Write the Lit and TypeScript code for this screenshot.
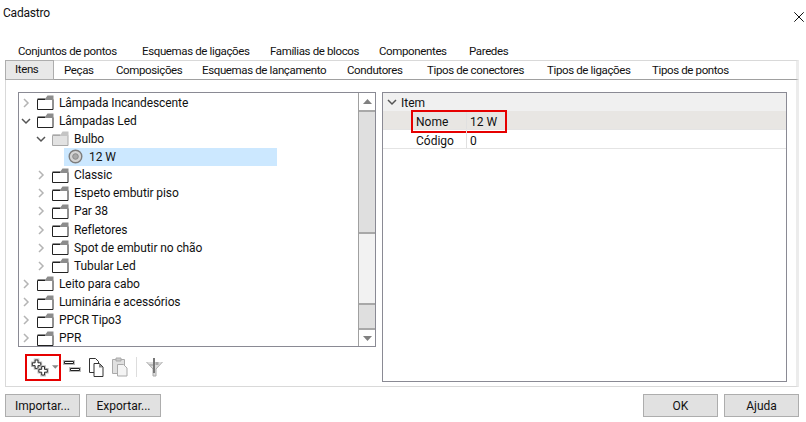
import { LitElement, html, css, svg } from "lit";
import { customElement } from "lit/decorators.js";

const row1 = [["Conjuntos de pontos", 124], ["Esquemas de ligações", 128], ["Famílias de blocos", 109], ["Componentes", 90], ["Paredes", 60]];
const row2 = [["Peças", 52], ["Composições", 86], ["Esquemas de lançamento", 145], ["Condutores", 80], ["Tipos de conectores", 120], ["Tipos de ligações", 105], ["Tipos de pontos", 90]];

type Node = { t: string; level: number; exp?: "c" | "o"; kind?: "gray" | "leaf"; sel?: boolean };
const tree: Node[] = [
  { t: "Lâmpada Incandescente", level: 0, exp: "c" },
  { t: "Lâmpadas Led", level: 0, exp: "o" },
  { t: "Bulbo", level: 1, exp: "o", kind: "gray" },
  { t: "12 W", level: 2, kind: "leaf", sel: true },
  { t: "Classic", level: 1, exp: "c" },
  { t: "Espeto embutir piso", level: 1, exp: "c" },
  { t: "Par 38", level: 1, exp: "c" },
  { t: "Refletores", level: 1, exp: "c" },
  { t: "Spot de embutir no chão", level: 1, exp: "c" },
  { t: "Tubular Led", level: 1, exp: "c" },
  { t: "Leito para cabo", level: 0, exp: "c" },
  { t: "Luminária e acessórios", level: 0, exp: "c" },
  { t: "PPCR Tipo3", level: 0, exp: "c" },
  { t: "PPR", level: 0, exp: "c" },
];

const chevO = svg`<path d="M1 3 L5 7 L9 3" fill="none" stroke="#555" stroke-width="1.5"/>`;
const chevC = svg`<path d="M3 1 L7 5 L3 9" fill="none" stroke="#b4b4b4" stroke-width="1.5"/>`;
const plusD = "M3.5 .5h3v3h3v3h-3v3h-3v-3h-3v-3h3z";
const plus = (x: number, y: number) => svg`<g transform="translate(${x} ${y})"><path d=${plusD} fill="none" stroke="#bdbdbd" stroke-width="3"/><path d=${plusD} fill="#fff" stroke="#222"/></g>`;

@customElement("app-root")
export class AppRoot extends LitElement {
  static styles = css`
    :host { display: block; width: 806px; height: 422px; background: #fff; position: relative; overflow: hidden;
      font-family: Roboto, "Open Sans", sans-serif; font-size: 12px; color: #111; }
    * { box-sizing: border-box; }
    .title { height: 40px; padding: 5px 0 0 3px; display: flex; justify-content: space-between; line-height: 17px; letter-spacing: -.2px; }
    .close { margin: 7px 2px 0 0; }
    .tabs { display: flex; font-size: 11.5px; letter-spacing: -.37px; }
    .r1 { height: 20px; padding-left: 18px; align-items: center; line-height: 20px; padding-top: 1px; }
    .tab { white-space: nowrap; flex: none; }
    .r2 { height: 20px; margin-left: 5px; width: 794px; border-top: 1px solid #d9d9d9; border-right: 3px solid #ececec; border-bottom: 1px solid #a0a0a0; align-items: center; position: relative; }
    .active { width: 49px; height: 20px; margin: -1px 10px 0 0; background: #e8e8e8; border: 1px solid #adadad; padding-left: 9px; line-height: 17px; flex: none; }
    .panel { margin-left: 5px; width: 794px; height: 307px; border: solid #d9d9d9; border-width: 0 3px 1px 1px; border-right-color: #ececec; padding: 12px 10px 0 12px; display: flex; gap: 6px; }
    .left { width: 358px; display: flex; flex-direction: column; flex: none; }
    .treebox { height: 255px; border: 1px solid #8a8a94; display: flex; overflow: hidden; }
    .tree { flex: 1; overflow: hidden; min-width: 0; letter-spacing: -.1px; padding-top: .5px; }
    .node { height: 18.15px; display: flex; align-items: center; white-space: nowrap; position: relative; }
    .exp { width: 14px; height: 18px; display: flex; align-items: center; justify-content: center; flex: none; margin-right: 4px; }
    .lbl { margin-left: 5px; line-height: 18px; }
    .sel { background: #cce8ff; width: 213px; margin-left: 15px; padding-left: 3px; }
    .lf { margin-left: 4px; }
    .leaf { margin-left: 1px; margin-right: 2px; display: block; flex: none; }
    .sb { width: 17px; flex: none; background: #dfdfdf; border-left: 1px solid #a0a0a0; display: flex; flex-direction: column; }
    .sbbtn { height: 18px; background: #fff; display: flex; align-items: center; justify-content: center; flex: none; }
    .top { border-bottom: 2px solid #a8a8a8; height: 19px; }
    .bot { border-top: 2px solid #a8a8a8; height: 18px; }
    .gap1 { height: 120px; flex: none; }
    .thumb { height: 73px; background: #f2f2f2; border-top: 2px solid #a8a8a8; border-bottom: 2px solid #a8a8a8; flex: none; }
    .track { flex: 1; }
    .tools { height: 28px; margin-top: 6px; padding-left: 7px; display: flex; align-items: center; }
    .add { width: 36px; height: 27px; border: 2px solid #e60000; position: relative; flex: none; display: flex; align-items: center; }
    .sep { width: 1px; height: 20px; background: #ddd; margin: 0 9px 0 8px; }
    .props { width: 405px; height: 290px; border: 1px solid #8a8a94; flex: none; }
    .phead { height: 18px; background: #f0f0f0; display: flex; align-items: center; line-height: 21px; }
    .phead .e { width: 18px; display: flex; justify-content: center; flex: none; }
    .phead .t { height: 18px; }
    .prow { height: 19px; display: flex; line-height: 22px; border-bottom: 1px solid #e4e4e4; position: relative; padding-left: 18px; }
    .prow.on { background: #e8e6e3; }
    .k { width: 66px; padding-left: 15px; flex: none; border-right: 1px solid #e0e0e0; height: 18px; }
    .v { padding-left: 3px; }
    .hl { position: absolute; left: 28px; top: -1px; width: 96px; height: 23px; border: 2px solid #e60000; }
    .foot { display: flex; justify-content: space-between; padding: 7px 7px 0 5px; }
    .foot div { display: flex; gap: 6px; }
    button { width: 75px; height: 23px; background: #e1e1e1; border: 1px solid #adadad; font: inherit; color: #111; padding: 0; display: block; }
  `;

  private ic(n: Node) {
    if (n.kind === "leaf")
      return html`<svg class="leaf" width="15" height="15" viewBox="0 0 15 15"><circle cx="7.5" cy="7.500" r="6.300" fill="#d4d4d4" stroke="#7d7d7d" stroke-width="1.400"/><circle cx="7.500" cy="7.500" r="2.800" fill="#a8a8a8" stroke="#8a8a8a"/></svg>`;
    if (n.kind === "gray")
      return html`<svg width="17" height="15" viewBox="0 0 17 15" style="flex:none"><path d="M.5 4.500h15.500v10H.500z" fill="#e2e2e2" stroke="#a8a8a8"/><path d="M8 4.500L10.500 .500H16.500V5H8z" fill="#c4c4c4"/><path d="M.5 3.500h8" stroke="#c4c4c4"/></svg>`;
    return html`<svg width="17" height="15" viewBox="0 0 17 15" style="flex:none"><path d="M.5 4.500h15.500v10H.500z" fill="#fff" stroke="#222"/><path d="M8 4L10.500 .500H16.500V5H8z" fill="#8c8c8c"/><path d="M.5 3.500h8" stroke="#8c8c8c"/></svg>`;
  }

  render() {
    return html`
      <div class="title"><span>Cadastro</span>
        <svg class="close" width="10" height="10" viewBox="0 0 10 10" ><path d="M.3 .3L9.700 9.700M9.700 .3L.3 9.700" stroke="#111" fill="none"/></svg>
      </div>
      <div class="tabs r1">${row1.map(([t, w]) => html`<div class="tab" style="width:${w}px">${t}</div>`)}</div>
      <div class="tabs r2"><div class="active">Itens</div>${row2.map(([t, w]) => html`<div class="tab" style="width:${w}px">${t}</div>`)}</div>
      <div class="panel">
        <div class="left">
          <div class="treebox">
            <div class="tree">
              ${tree.map(n => html`<div class="node" style="padding-left:${n.level * 15}px">
                ${n.kind === "leaf"
                  ? html`<div class="sel node"><span>${this.ic(n)}</span><span class="lbl lf">${n.t}</span></div>`
                  : html`<div class="exp"><svg width="10" height="10" viewBox="0 0 10 10">${n.exp === "o" ? chevO : chevC}</svg></div>${this.ic(n)}<span class="lbl">${n.t}</span>`}
              </div>`)}
            </div>
            <div class="sb">
              <div class="sbbtn top"><svg width="9" height="5" viewBox="0 0 9 5"><path d="M0 5L4.500 0L9 5z" fill="#808080"/></svg></div>
              <div class="gap1"></div>
              <div class="thumb"></div>
              <div class="track"></div>
              <div class="sbbtn bot"><svg width="9" height="5" viewBox="0 0 9 5"><path d="M0 0L4.500 5L9 0z" fill="#808080"/></svg></div>
            </div>
          </div>
          <div class="tools">
            <div class="add"><svg width="24" height="21" viewBox="0 0 24 21" style="margin-left:3px">${plus(2, 2)}${plus(9, 9)}</svg>
              <svg width="7" height="4" viewBox="0 0 7 4" style="margin-left:0"><path d="M0 0h7L3.500 4z" fill="#888"/></svg></div>
            <svg width="18" height="14" viewBox="0 0 18 14" style="margin-left:2px;flex:none"><path d="M1.500 1.500h9v2h-9zM7.500 8.500h9v2h-9z" fill="#fff" stroke="#bdbdbd" stroke-width="3"/><path d="M1.500 1.500h9v2h-9zM7.500 8.500h9v2h-9z" fill="#fff" stroke="#222"/></svg>
            <svg width="15" height="19" viewBox="0 0 15 19" style="margin-left:8px;flex:none"><path d="M.5 .5h6l3 3v11h-9z" fill="#fff" stroke="#333"/><path d="M5 5.500h5.500l3.500 3.500v9.500h-9z" fill="#fff" stroke="#333"/><path d="M10 5.500v4h4z" fill="#888"/></svg>
            <svg width="16" height="20" viewBox="0 0 16 20" style="margin-left:8px;flex:none"><path d="M.5 2.500h12v14h-12z" fill="#e0e0e0" stroke="#aaa"/><path d="M4 1h5v3h-5z" fill="#ccc" stroke="#aaa"/><path d="M5.500 7.500h6l3.500 3.500v8h-9.500z" fill="#f4f4f4" stroke="#aaa"/></svg>
            <div class="sep"></div>
            <svg width="17" height="20" viewBox="0 0 17 20" style="flex:none"><path d="M.5 5L7 12v7h3v-7L16.500 5" fill="#ddd" stroke="#aaa"/><path d="M8 1v15" stroke="#777" stroke-width="2"/><rect x="9.500" y="5" width="3" height="3" fill="#aaa"/><rect x="3" y="7" width="4" height="2" fill="#bbb"/></svg>
          </div>
        </div>
        <div class="props">
          <div class="phead"><div class="e"><svg width="10" height="10" viewBox="0 0 10 10">${chevO}</svg></div><div class="t">Item</div></div>
          <div class="prow on"><div class="k">Nome</div><div class="v">12 W</div><div class="hl"></div></div>
          <div class="prow"><div class="k">Código</div><div class="v">0</div></div>
        </div>
      </div>
      <div class="foot">
        <div><button>Importar...</button><button>Exportar...</button></div>
        <div><button>OK</button><button>Ajuda</button></div>
      </div>`;
  }
}
